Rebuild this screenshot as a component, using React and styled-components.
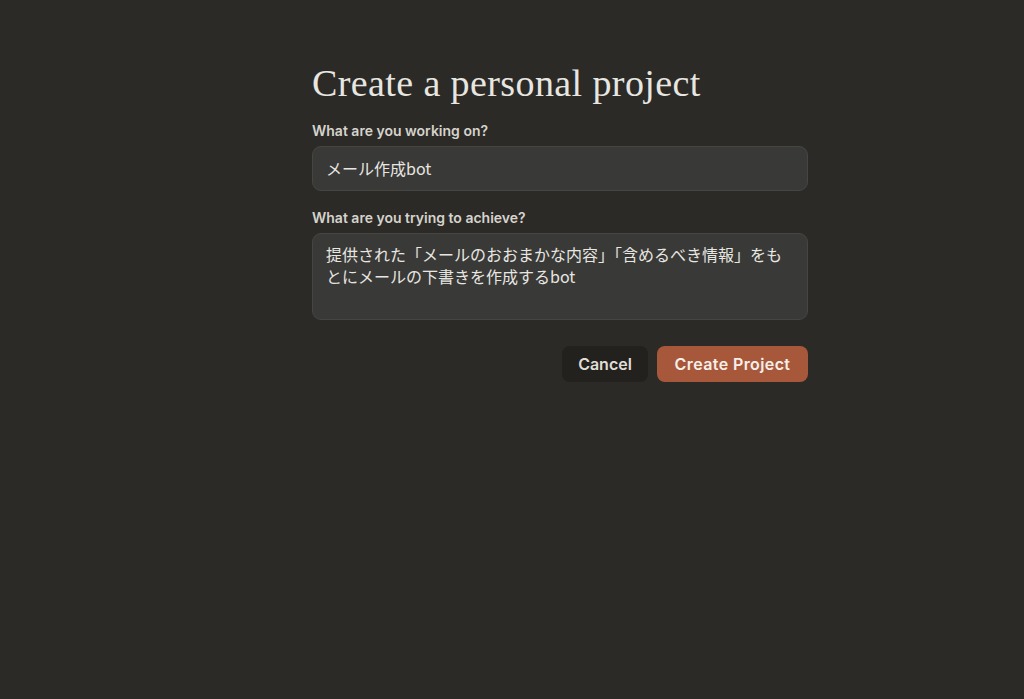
import React from "react";
import styled, { createGlobalStyle } from "styled-components";

const Global = createGlobalStyle`
  html, body { margin: 0; padding: 0; background: #2b2a27; }
  body { min-height: 699px; font-family: "Inter", "Noto Sans CJK JP", sans-serif; }
  * { box-sizing: border-box; }
`;

const Page = styled.div`
  min-height: 699px;
  background: #2b2a27;
  padding: 62px 0 0 312px;
`;

const Form = styled.form`
  width: 496px;
  display: flex;
  flex-direction: column;
`;

const Title = styled.h1`
  margin: 0 0 17px 0;
  font-family: "Liberation Serif", serif;
  font-weight: 400;
  font-size: 38px;
  line-height: 43px;
  color: #e8e6e0;
  letter-spacing: 0.4px;
`;

const Label = styled.label`
  display: block;
  font-family: "Inter", sans-serif;
  font-weight: 600;
  font-size: 14px;
  line-height: 18px;
  color: #d6d3cc;
  margin-bottom: 6px;
`;

const Field = styled.div`
  display: flex;
  flex-direction: column;
  margin-bottom: ${(p) => p.$mb || 0}px;
`;

const inputBase = `
  width: 100%;
  background: #393937;
  border: 1px solid #464542;
  border-radius: 9px;
  color: #e8e6e1;
  font-family: "Noto Sans CJK JP", sans-serif;
  font-size: 16px;
  outline: none;
`;

const TextInput = styled.input`
  ${inputBase}
  height: 45px;
  padding: 0 13px 2px;
`;

const TextArea = styled.textarea`
  ${inputBase}
  height: 87px;
  padding: 9px 13px;
  line-height: 22px;
  resize: none;
`;

const Actions = styled.div`
  display: flex;
  justify-content: flex-end;
  gap: 9px;
`;

const Button = styled.button`
  height: 36px;
  width: ${(p) => p.$w}px;
  border: none;
  border-radius: 8px;
  padding: 0;
  font-family: "Inter", sans-serif;
  font-weight: 600;
  font-size: 16px;
  letter-spacing: ${(p) => (p.$primary ? "0.4px" : "0")};
  cursor: pointer;
  background: ${(p) => (p.$primary ? "#a8583a" : "#22211e")};
  color: ${(p) => (p.$primary ? "#f6efe9" : "#e0ddd6")};
`;

export default function App() {
  return (
    <>
      <Global />
      <Page>
        <Form onSubmit={(e) => e.preventDefault()}>
          <Title>Create a personal project</Title>
          <Field $mb={18}>
            <Label>What are you working on?</Label>
            <TextInput defaultValue="メール作成bot" />
          </Field>
          <Field $mb={26}>
            <Label>What are you trying to achieve?</Label>
            <TextArea defaultValue="提供された「メールのおおまかな内容」「含めるべき情報」をもとにメールの下書きを作成するbot" />
          </Field>
          <Actions>
            <Button type="button" $w={86}>Cancel</Button>
            <Button type="submit" $primary $w={151}>Create Project</Button>
          </Actions>
        </Form>
      </Page>
    </>
  );
}
